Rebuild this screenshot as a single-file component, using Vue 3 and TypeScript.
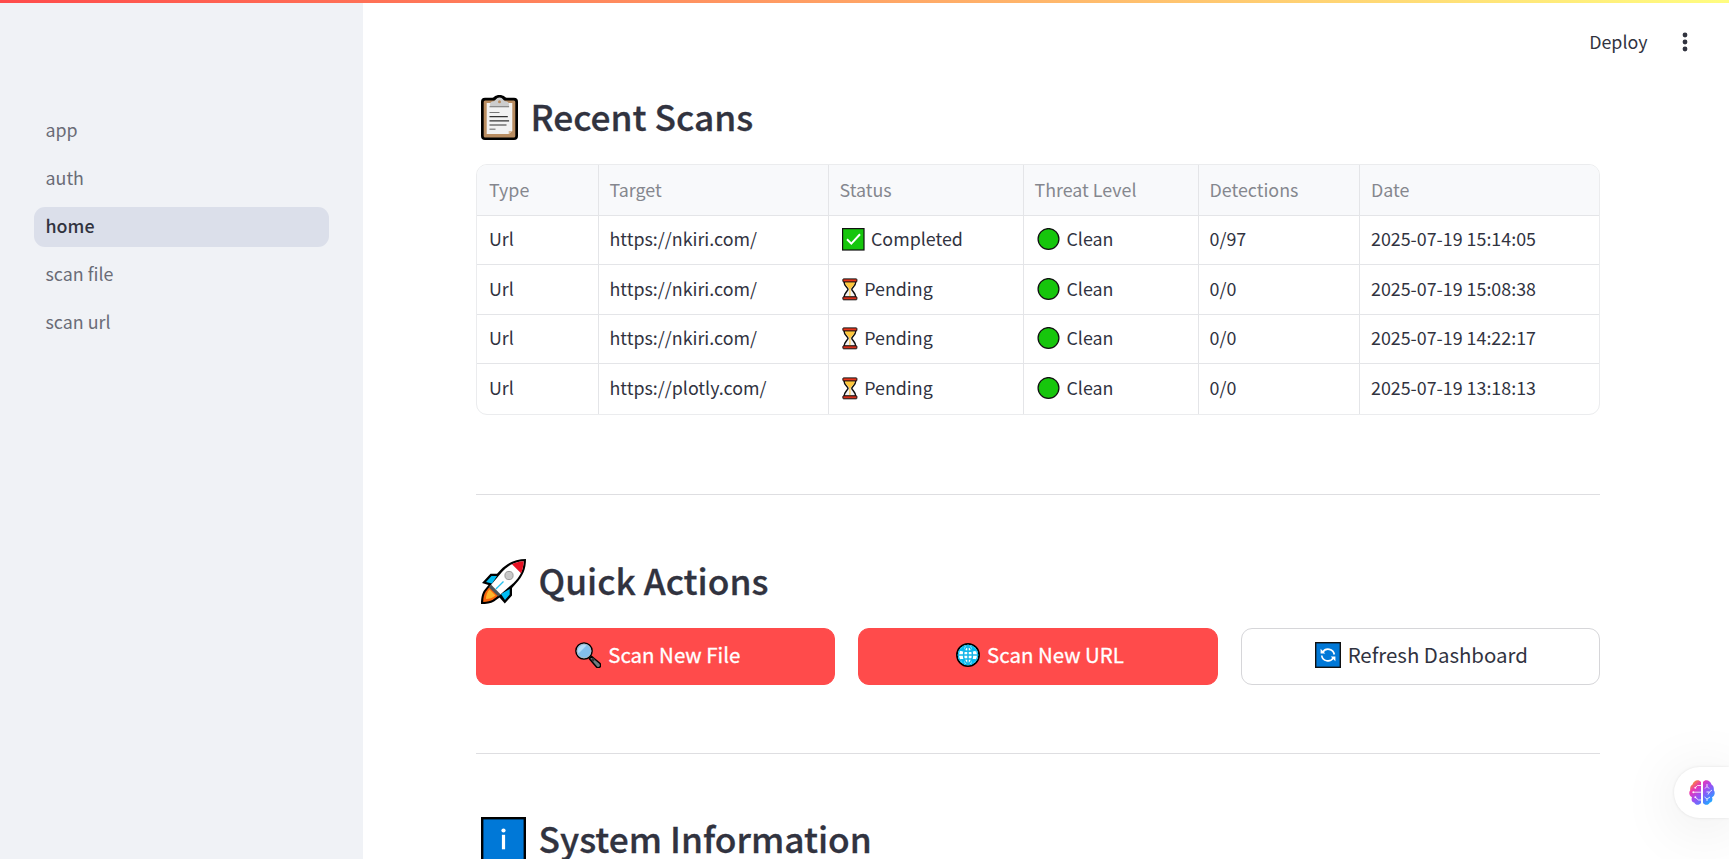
<script setup lang="ts">
interface Scan {
  target: string
  done: boolean
  detections: string
  date: string
}

const pages: string[] = ['app', 'auth', 'home', 'scan file', 'scan url']
const current = 'home'

const columns: string[] = ['Type', 'Target', 'Status', 'Threat Level', 'Detections', 'Date']

const scans: Scan[] = [
  { target: 'https://nkiri.com/', done: true, detections: '0/97', date: '2025-07-19 15:14:05' },
  { target: 'https://nkiri.com/', done: false, detections: '0/0', date: '2025-07-19 15:08:38' },
  { target: 'https://nkiri.com/', done: false, detections: '0/0', date: '2025-07-19 14:22:17' },
  { target: 'https://plotly.com/', done: false, detections: '0/0', date: '2025-07-19 13:18:13' },
]
</script>

<template>
  <div class="page">
    <div class="rainbow"></div>

    <aside class="sidebar">
      <nav>
        <a v-for="p in pages" :key="p" class="link" :class="{ active: p === current }">{{ p }}</a>
      </nav>
    </aside>

    <main class="main">
      <header class="toolbar">
        <span class="deploy">Deploy</span>
        <svg class="dots" width="6" height="20" viewBox="0 0 6 20" fill="#31333f">
          <circle cx="3" cy="3" r="2.4" /><circle cx="3" cy="10" r="2.4" /><circle cx="3" cy="17" r="2.4" />
        </svg>
      </header>

      <div class="content">
        <h2 class="title first">
          <svg class="clip" width="37" height="45" viewBox="0 0 37 45">
            <path d="M4 2.7h7.5C13 2.7 14 0 18.500 0s5.500 2.700 7 2.700H33a4 4 0 0 1 4 4V41a4 4 0 0 1-4 4H4a4 4 0 0 1-4-4V6.700a4 4 0 0 1 4-4z" fill="#000" />
            <rect x="2.700" y="5.400" width="31.600" height="37" rx="1.500" fill="#b98d61" />
            <path d="M5.700 8h25.600v28l-3.600 3H5.700z" fill="#f2f2f2" />
            <path d="M27.700 39v-3h3.600z" fill="#d6b999" />
            <path d="M9 12V9.500c0-2 1.300-3.300 3.500-3.300 2.200 0 2.500-3.700 6-3.700s3.800 3.700 6 3.700S28 7.500 28 9.500V12z" fill="#ccc" />
            <circle cx="18.500" cy="6.800" r="1.500" fill="#b98d61" />
            <path d="M8.500 11.800h19.600M8.500 17.500h10" stroke="#777" stroke-width="1.100" />
            <path d="M8.500 21.600h18.300M8.500 25.800h19.600M8.500 30h17" stroke="#333" stroke-width="1.200" />
            <path d="M8.500 34.200h6" stroke="#777" stroke-width="1.200" />
          </svg>
          <span>Recent Scans</span>
        </h2>

        <div class="table">
          <div class="row head">
            <div v-for="c in columns" :key="c" class="cell"><span>{{ c }}</span></div>
          </div>
          <div v-for="s in scans" :key="s.date" class="row">
            <div class="cell"><span>Url</span></div>
            <div class="cell"><span>{{ s.target }}</span></div>
            <div class="cell">
              <template v-if="s.done">
                <svg class="check" width="23" height="23" viewBox="0 0 23 23">
                  <rect x=".6" y=".6" width="21.400" height="21.400" fill="#16c60c" stroke="#111" stroke-width="1.200" />
                  <path d="M5 11.300l4.300 4.300 8.700-9.300" fill="none" stroke="#fff" stroke-width="2" />
                </svg>
                <span>Completed</span>
              </template>
              <template v-else>
                <svg class="glass" width="16" height="23" viewBox="0 0 16 23">
                  <path d="M2 3.500C2 8 6 9.500 6 11.300S2 15 2 19.500h11.800c0-4.500-4-6.400-4-8.200s4-3.300 4-7.800z" fill="#f2f2f2" stroke="#111" stroke-width="1.500" />
                  <path d="M3 4h9.800c0 4-3.800 5-4.200 7.300H7.300C7 9 3 8 3 4z" fill="#ffc83d" />
                  <path d="M7.900 10v9" stroke="#ffc83d" stroke-width="1.100" />
                  <rect x=".9" y=".9" width="14" height="3" rx=".7" fill="#e8361c" stroke="#111" stroke-width="1" />
                  <rect x=".9" y="18.800" width="14" height="3" rx=".7" fill="#d8301a" stroke="#111" stroke-width="1" />
                </svg>
                <span>Pending</span>
              </template>
            </div>
            <div class="cell">
              <svg class="dot" width="23" height="23" viewBox="0 0 23 23">
                <circle cx="11.500" cy="11" r="10.400" fill="#16c60c" stroke="#111" stroke-width="1.300" />
              </svg>
              <span>Clean</span>
            </div>
            <div class="cell"><span>{{ s.detections }}</span></div>
            <div class="cell"><span>{{ s.date }}</span></div>
          </div>
        </div>

        <hr class="rule one" />

        <h2 class="title second">
          <svg class="big" width="45" height="45" viewBox="0 0 45 45">
            <path d="M45 0C35 0 26.500 3.500 19.500 11L16 14.700H9.500L1 24l6.500 2L3 31.500C.8 34.500 0 40 0 45c5 0 10-.5 13-2.500l5.500-4L23.800 44.500 31 36.500V29l4-4.500C42 17 45 10 45 0z" fill="#000" />
            <path d="M16 17H10.500L5 23l6 1.500zM28.700 30v5.500L24 41l-4-6z" fill="#00bcf2" />
            <path d="M42.700 2.300C33 3 27 6.500 21 13L9.500 26.500l9.500 9.300L32.500 24C38.500 18 42.300 12 42.700 2.300z" fill="#fff" />
            <path d="M42.700 2.300c-4.500.3-8.200 1.200-11.700 2.900L40 14.200c1.600-3.400 2.400-7.200 2.700-11.900z" fill="#e81224" />
            <path d="M9.500 26.500L4.800 32.500C2.800 35.500 2.200 39 2.200 43c4 0 7.300-.8 10.300-2.700l6-4.500z" fill="#f7630c" />
            <path d="M8.500 30.500C6 33 5 37 5 40c3 0 7-1 9.500-3.500z" fill="#ffb52b" />
            <path d="M10.200 25.800l9.500 9.600-2.300 2L7.800 28.300z" fill="#4b5459" />
            <path d="M22.500 22.500l-7.600 7.500" stroke="#26c2ef" stroke-width="1.300" />
            <circle cx="28" cy="16.500" r="4.100" fill="#c8c8c8" stroke="#999" stroke-width="1" />
          </svg>
          <span>Quick Actions</span>
        </h2>

        <div class="actions">
          <button class="btn primary">
            <svg class="bi" width="26" height="26" viewBox="0 0 26 26">
              <path d="M16.500 14.300l8.300 7c1 1 1.100 2.300.3 3.400-1 1.100-2.600 1.300-3.600.3l-7.100-8.200z" fill="#6f7b80" stroke="#000" stroke-width="1.500" />
              <path d="M18 15.500l2.200 2-2 2.200-2-2.300z" fill="#333" />
              <circle cx="9" cy="9" r="8.100" fill="#83beec" stroke="#000" stroke-width="1.500" />
              <circle cx="9" cy="9" r="6.900" fill="none" stroke="#aebbc2" stroke-width=".9" />
              <path d="M3.500 11.500a6 6 0 0 1 8-8z" fill="#b4dcf8" />
            </svg>
            <span>Scan New File</span>
          </button>
          <button class="btn primary">
            <svg class="bi globe" width="24" height="24" viewBox="0 0 24 24">
              <circle cx="12" cy="12" r="11.100" fill="#fff" stroke="#000" stroke-width="1.700" />
              <circle cx="12" cy="12" r="9.700" fill="#fff" stroke="#00bcf2" stroke-width="1.200" />
              <path d="M12 2v20M2 12h20M4 6.700c4.500 2 11.500 2 16 0M4 17.300c4.500-2 11.500-2 16 0M12 2.300c-6 5.500-6 13.900 0 19.400M12 2.300c6 5.500 6 13.900 0 19.400" fill="none" stroke="#15b6e8" stroke-width="1.500" />
              <path d="M5 5.500l4-2.500-1 4-4 1zM15 3l4 2.500 1 3-4-1.500zM4.500 16l3.500 1 1 4-3-2zM19.500 16L16 17l-1 4 3.500-2z" fill="#00bcf2" />
            </svg>
            <span>Scan New URL</span>
          </button>
          <button class="btn">
            <svg class="bi" width="26" height="26" viewBox="0 0 26 26">
              <rect x=".7" y=".7" width="24.600" height="24.600" fill="#0078d7" stroke="#111" stroke-width="1.400" />
              <path d="M7.700 10.200A6.300 6.300 0 0 1 19.300 12.500M18.300 15.900A6.300 6.300 0 0 1 6.700 13.500" fill="none" stroke="#fff" stroke-width="1.700" />
              <path d="M5.600 6.800v4.700h4.700zM20.400 19.200v-4.700h-4.700z" fill="#fff" />
            </svg>
            <span>Refresh Dashboard</span>
          </button>
        </div>

        <hr class="rule two" />

        <h2 class="title third">
          <svg class="big" width="45" height="45" viewBox="0 0 45 45">
            <rect x="1.200" y="1.200" width="42.600" height="42.600" fill="#0078d7" stroke="#000" stroke-width="2.400" />
            <circle cx="22.500" cy="13.500" r="2.100" fill="#fff" />
            <rect x="20.900" y="17.800" width="3.200" height="14.500" fill="#fff" />
          </svg>
          <span>System Information</span>
        </h2>
      </div>
    </main>

    <div class="assistant">
      <svg width="26" height="25" viewBox="0 0 26 25">
        <defs>
          <linearGradient id="brain" gradientUnits="userSpaceOnUse" x1="3" y1="1" x2="23" y2="23">
            <stop offset="0" stop-color="#ff9a1f" />
            <stop offset=".25" stop-color="#ea35b4" />
            <stop offset=".5" stop-color="#a34cf0" />
            <stop offset=".75" stop-color="#5a78ff" />
            <stop offset="1" stop-color="#14b4ff" />
          </linearGradient>
        </defs>
        <path d="M12 2v21c-1.500 2.300-5.500 2.600-6.800-.5C2.800 22 2 19.500 3 17.200.2 16-.5 12.500 1.200 10.300.8 7 2 5.300 3.500 4.500 4.500.5 9.500-1.200 12 2z" fill="url(#brain)" />
        <path d="M14 2v21c1.500 2.300 5.500 2.600 6.800-.5 2.400-.5 3.200-3 2.200-5.300 2.800-1.200 3.500-4.700 1.800-6.900.4-3.300-.8-5-2.300-5.800C21.500.5 16.500-1.200 14 2z" fill="url(#brain)" />
        <g fill="none" stroke="#fff" stroke-width="1" opacity=".8">
          <path d="M12 5.500H8.500L6.500 7.500M12 12.200H4.500M12 20H9.500L6.500 17.500M16 8.500l2-2 2 2M18 6.500V4M17.500 12h3l2.500-2M20.500 12l-1.500 2.500M15.500 17l2.500 2 3-2M18 19v2" />
        </g>
        <g fill="#fff" opacity=".9"><circle cx="6.300" cy="7.700" r="1" /><circle cx="4.300" cy="12.200" r="1" /><circle cx="6.300" cy="17.300" r="1" /></g>
      </svg>
    </div>
  </div>
</template>

<style>
html,
body {
  margin: 0;
  overflow: hidden;
}
</style>

<style scoped>
.page {
  position: relative;
  display: flex;
  width: 100vw;
  height: 100vh;
  overflow: hidden;
  box-sizing: border-box;
  background: #fff;
  color: #31333f;
  font-family: "Noto Sans CJK SC", "Noto Sans", sans-serif;
  font-size: 17.850px;
}
.page *,
.page *::before {
  box-sizing: border-box;
}
.rainbow {
  position: absolute;
  top: 0;
  left: 0;
  right: 0;
  height: 3px;
  background: linear-gradient(90deg, #ff4b4b, #fffd80);
}
.sidebar {
  flex: none;
  width: 362.500px;
  padding: 111px 34px 0;
  background: #f0f2f6;
}
nav {
  display: flex;
  flex-direction: column;
  gap: 8.500px;
}
.link {
  height: 39.500px;
  padding: 0 11.500px 3px;
  border-radius: 11px;
  line-height: 36.500px;
  color: #6a6c76;
}
.link.active {
  background: #dbdfea;
  color: #31333f;
  font-weight: 500;
}
.main {
  flex: 1;
  min-width: 0;
}
.toolbar {
  display: flex;
  align-items: center;
  justify-content: flex-end;
  height: 84px;
  padding-right: 41.500px;
}
.deploy {
  margin-right: 34px;
  padding-bottom: 2.500px;
}
.content {
  width: 1124px;
  margin-left: 113.500px;
}
.title {
  display: flex;
  align-items: flex-start;
  height: 45px;
  margin: 0;
  padding-left: 5px;
  font-size: 35.320px;
  font-weight: 500;
  line-height: 45px;
  -webkit-text-stroke: 0.3px #31333f;
}
.title svg {
  flex: none;
}
.title span {
  position: relative;
  top: -1.500px;
}
.clip {
  margin-right: 12.500px;
}
.big {
  margin-right: 12.500px;
}
.first {
  margin-top: 10.500px;
}
.table {
  height: 251px;
  margin-top: 24.500px;
  overflow: hidden;
  border: 1px solid #ebecee;
  border-radius: 11px;
}
.row {
  display: grid;
  grid-template-columns: 122px 230px 195px 175px 161px 239px;
  height: 49.400px;
}
.row.head {
  height: 51px;
  background: #f8f9fb;
  color: #85878e;
}
.cell {
  display: flex;
  align-items: center;
  padding: 0 0 3.600px 10.500px;
  border-right: 1px solid #e4e5e8;
  border-bottom: 1px solid #e4e5e8;
  white-space: nowrap;
}
.head .cell {
  padding-bottom: 2.500px;
}
.cell:first-child {
  padding-left: 12px;
}
.cell:last-child {
  padding-left: 11px;
  border-right: 0;
}
.row:last-child .cell {
  border-bottom: 0;
}
.cell svg {
  flex: none;
  position: relative;
  top: 1.300px;
}
.check {
  margin: 0 6.200px 0 2.300px;
}
.glass {
  margin: 0 6px 0 2.700px;
}
.dot {
  margin: 0 6.700px 0 2.300px;
}
.rule {
  height: 1px;
  margin: 0;
  border: 0;
  background: #dedee1;
}
.one {
  margin-top: 79px;
}
.second {
  margin-top: 63.500px;
}
.actions {
  display: grid;
  grid-template-columns: repeat(3, 1fr);
  gap: 22.800px;
  margin-top: 24.500px;
}
.btn {
  display: flex;
  align-items: center;
  justify-content: center;
  height: 57px;
  padding: 0 0 5.500px 2px;
  border: 1px solid #d6d6d9;
  border-radius: 11px;
  background: #fff;
  color: #31333f;
  font-family: inherit;
  font-size: 20.430px;
}
.primary {
  padding-left: 4px;
  border-color: #ff4b4b;
  background: #ff4b4b;
  color: #fff;
  -webkit-text-stroke: 0.3px #fff;
}
.bi {
  position: relative;
  top: 1px;
  margin-right: 7px;
}
.two {
  margin-top: 67.500px;
}
.third {
  margin-top: 63px;
}
.assistant {
  position: absolute;
  top: 767px;
  right: 0;
  width: 55px;
  height: 51px;
  padding: 13px 0 0 15px;
  border-radius: 26px 0 0 26px;
  background: #fff;
  box-shadow: 0 0 3px rgba(0, 0, 0, 0.1), 0 8px 60px rgba(0, 0, 0, 0.1);
}
.assistant svg {
  display: block;
}
</style>
